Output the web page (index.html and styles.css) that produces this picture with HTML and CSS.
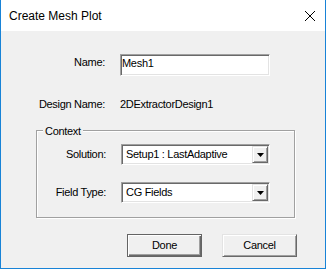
FILE: index.html
```html
<!DOCTYPE html>
<html>
<head>
<meta charset="utf-8">
<title>Create Mesh Plot</title>
<link rel="stylesheet" href="styles.css">
</head>
<body>
<div class="window">
  <div class="titlebar">
    <span class="title">Create Mesh Plot</span>
    <svg class="close" width="10" height="10" viewBox="0 0 10 10"><path d="M0 0 L10 10 M10 0 L0 10" stroke="#000" stroke-width="1" fill="none"/></svg>
  </div>
  <div class="client">
    <div class="row row-name">
      <span class="label label-top">Name:</span>
      <div class="textbox">Mesh1</div>
    </div>
    <div class="row row-design">
      <span class="label">Design Name:</span>
      <span class="value">2DExtractorDesign1</span>
    </div>
    <div class="group">
      <span class="legend">Context</span>
      <div class="grow">
        <span class="glabel">Solution:</span>
        <div class="combo">
          <span class="combo-text">Setup1 : LastAdaptive</span>
          <span class="combo-btn"><svg width="7" height="4" viewBox="0 0 7 4"><polygon points="0,0 7,0 3.5,4" fill="#000"/></svg></span>
        </div>
      </div>
      <div class="grow">
        <span class="glabel">Field Type:</span>
        <div class="combo">
          <span class="combo-text">CG Fields</span>
          <span class="combo-btn"><svg width="7" height="4" viewBox="0 0 7 4"><polygon points="0,0 7,0 3.5,4" fill="#000"/></svg></span>
        </div>
      </div>
    </div>
    <div class="buttons">
      <div class="btn btn-default">Done</div>
      <div class="btn">Cancel</div>
    </div>
  </div>
</div>
</body>
</html>
```
FILE: styles.css
```css
* { box-sizing: border-box; }
html, body { margin: 0; padding: 0; }
body {
  width: 326px;
  height: 269px;
  overflow: hidden;
  font-family: "Liberation Sans", Arial, sans-serif;
  background: #f0f0f0;
}
.window {
  width: 326px;
  height: 269px;
  border: 1px solid #1883d7;
  border-top: 0;
  display: flex;
  flex-direction: column;
  background: #f0f0f0;
}
.titlebar {
  height: 31px;
  flex: none;
  background: #fff;
  display: flex;
  align-items: center;
  padding-left: 8px;
}
.title {
  font-size: 12px;
  line-height: 16px;
  color: #000;
}
.close {
  margin-left: auto;
  margin-right: 10px;
}
.client {
  flex: 1;
  font-size: 11px;
  letter-spacing: -0.3px;
  line-height: 13px;
  color: #000;
  display: flex;
  flex-direction: column;
}
.row { display: flex; }
.row-name { margin-top: 23px; height: 22px; }
.row-design { margin-top: 22px; }
.label {
  width: 104px;
  margin-right: 15px;
  text-align: right;
  flex: none;
}
.label-top { margin-top: 2px; }
.textbox {
  width: 150px;
  height: 22px;
  background: #fff;
  border: 1px solid;
  border-color: #a0a0a0 #fff #fff #a0a0a0;
  box-shadow: inset 1px 1px 0 #696969, inset -1px -1px 0 #e3e3e3;
  padding: 2px 0 0 1px;
}
.group {
  position: relative;
  margin: 19px 0 0 35px;
  width: 259px;
  height: 88px;
  border: 1px solid #a0a0a0;
  box-shadow: inset 1px 1px 0 #fff, 1px 1px 0 #fff;
  padding-top: 13px;
  display: flex;
  flex-direction: column;
  gap: 17px;
}
.legend {
  position: absolute;
  left: 6px;
  top: -6px;
  padding: 0 2px;
  background: #f0f0f0;
}
.grow {
  display: flex;
  align-items: center;
  height: 21px;
}
.glabel {
  width: 69px;
  margin-right: 15px;
  text-align: right;
  flex: none;
}
.combo {
  width: 149px;
  height: 21px;
  background: #fff;
  border: 1px solid;
  border-color: #a0a0a0 #fff #fff #a0a0a0;
  box-shadow: inset 1px 1px 0 #696969, inset -1px -1px 0 #e3e3e3;
  padding: 1px;
  display: flex;
  align-items: center;
}
.combo-text {
  flex: 1;
  padding-left: 3px;
}
.combo-btn {
  width: 16px;
  height: 17px;
  flex: none;
  background: #f0f0f0;
  border: 1px solid;
  border-color: #e3e3e3 #696969 #696969 #e3e3e3;
  box-shadow: inset 1px 1px 0 #fff, inset -1px -1px 0 #a0a0a0;
  display: flex;
  align-items: center;
  justify-content: center;
}
.combo-btn svg { display: block; }
.buttons {
  display: flex;
  justify-content: flex-end;
  gap: 20px;
  margin-top: 16px;
  padding-right: 28px;
}
.btn {
  width: 75px;
  height: 23px;
  display: flex;
  align-items: center;
  justify-content: center;
  background: #f0f0f0;
  border: 1px solid;
  border-color: #e3e3e3 #696969 #696969 #e3e3e3;
  box-shadow: inset 1px 1px 0 #fff, inset -1px -1px 0 #a0a0a0;
}
.btn-default {
  border: 1px solid #646464;
  box-shadow: inset 1px 1px 0 #fff, inset -1px -1px 0 #696969, inset -2px -2px 0 #a0a0a0;
}
```
